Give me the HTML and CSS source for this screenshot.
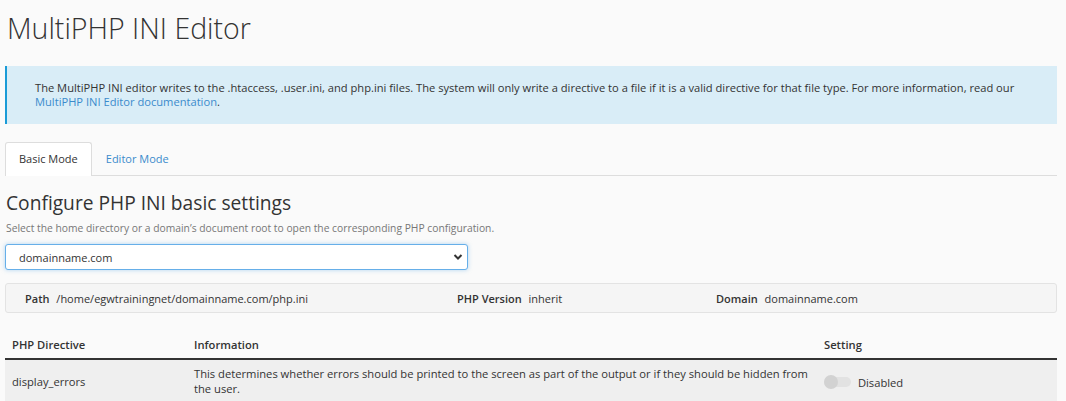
FILE: index.html
```html
<!DOCTYPE html>
<html lang="en">
<head>
    <meta charset="UTF-8">
    <title>MultiPHP INI Editor</title>
    <link rel="stylesheet" href="styles.css">
</head>
<body>
    <div class="page">
        <h1 class="page-title">MultiPHP INI Editor</h1>

        <div class="alert">
            The MultiPHP INI editor writes to the .htaccess, .user.ini, and php.ini files. The system will only write a directive to a file if it is a valid directive for that file type. For more information, read our
            <a href="#">MultiPHP INI Editor documentation</a>.
        </div>

        <ul class="tabs">
            <li class="tab active">Basic Mode</li>
            <li class="tab"><a href="#">Editor Mode</a></li>
        </ul>

        <h2 class="section-title">Configure PHP INI basic settings</h2>
        <p class="help">Select the home directory or a domain’s document root to open the corresponding PHP configuration.</p>

        <div class="select-box">
            <span>domainname.com</span>
            <svg width="10" height="8" viewBox="0 0 10 8"><path d="M1.5 2 L5 5.5 L8.5 2" fill="none" stroke="#333" stroke-width="2"/></svg>
        </div>

        <div class="info-bar">
            <div class="info-item"><b>Path</b> /home/egwtrainingnet/domainname.com/php.ini</div>
            <div class="info-item"><b>PHP Version</b> inherit</div>
            <div class="info-item"><b>Domain</b> domainname.com</div>
        </div>

        <table class="directives">
            <thead>
                <tr>
                    <th class="col-name">PHP Directive</th>
                    <th class="col-info">Information</th>
                    <th class="col-set">Setting</th>
                </tr>
            </thead>
            <tbody>
                <tr>
                    <td>display_errors</td>
                    <td>This determines whether errors should be printed to the screen as part of the output or if they should be hidden from the user.</td>
                    <td>
                        <span class="toggle"><span class="knob"></span></span>
                        <span class="toggle-label">Disabled</span>
                    </td>
                </tr>
            </tbody>
        </table>
    </div>
</body>
</html>
```

FILE: styles.css
```css
body {
    margin: 0;
    background: #fafafa;
    font-family: "Open Sans", "Liberation Sans", sans-serif;
    color: #333;
    font-size: 11px;
}
.page {
    padding: 0 9px 0 5px;
}
.page-title {
    margin: 0;
    padding: 8px 0 0 2px;
    font-size: 28.5px;
    font-weight: 300;
    line-height: 40px;
    color: #333;
}
.alert {
    margin-top: 18px;
    background: #d9edf7;
    border-left: 2px solid #1a9bd7;
    padding: 15px 28px 15px;
    line-height: 14px;
    font-size: 11.15px;
}
.alert a {
    color: #3b8bcc;
    text-decoration: none;
}
.tabs {
    list-style: none;
    margin: 18px 0 0;
    padding: 0;
    display: flex;
    border-bottom: 1px solid #ddd;
}
.tab {
    padding: 0 13px;
    line-height: 32px;
    font-size: 11px;
    border: 1px solid transparent;
    border-bottom: none;
    border-radius: 3px 3px 0 0;
    margin-bottom: -1px;
}
.tab a {
    color: #3b8bcc;
    text-decoration: none;
}
.tab.active {
    background: #fff;
    border-color: #ddd;
    padding-bottom: 1px;
}
.section-title {
    margin: 14px 0 0 1px;
    font-size: 19.2px;
    font-weight: 400;
    line-height: 26px;
}
.help {
    margin: 5px 0 0 1px;
    color: #777;
    font-size: 10.3px;
    line-height: 14px;
}
.select-box {
    margin-top: 9px;
    width: 435px;
    height: 24px;
    padding: 0 13px;
    display: flex;
    align-items: center;
    justify-content: space-between;
    background: #fff;
    border: 1px solid #66afe9;
    border-radius: 3px;
    box-shadow: 0 0 4px rgba(102, 175, 233, 0.5);
    font-size: 11px;
}
.select-box svg {
    margin-right: -9px;
}
.info-bar {
    margin-top: 13px;
    display: grid;
    grid-template-columns: 432px 259px 1fr;
    padding: 0 19px;
    height: 28px;
    align-items: center;
    background: #f5f5f5;
    border: 1px solid #e3e3e3;
    border-radius: 3px;
}
.info-item b {
    font-weight: 600;
    margin-right: 4px;
}
.directives {
    margin-top: 17px;
    width: 100%;
    border-collapse: collapse;
    font-size: 11.2px;
}
.directives th {
    text-align: left;
    font-weight: 600;
    padding: 8px 7px 6px;
    border-bottom: 2px solid #333;
    line-height: 14px;
}
.col-name {
    width: 168px;
}
.col-info {
    width: 616px;
}
.directives td {
    background: #efefef;
    padding: 6px 7px;
    line-height: 15px;
    vertical-align: middle;
}
.toggle {
    display: inline-block;
    position: relative;
    width: 27px;
    height: 10px;
    margin-right: 4px;
    background: #e2e2e2;
    border-radius: 5px;
    vertical-align: middle;
}
.knob {
    position: absolute;
    left: 0;
    top: -2px;
    width: 14px;
    height: 14px;
    border-radius: 50%;
    background: #d2d2d2;
}
.toggle-label {
    vertical-align: middle;
}
```
